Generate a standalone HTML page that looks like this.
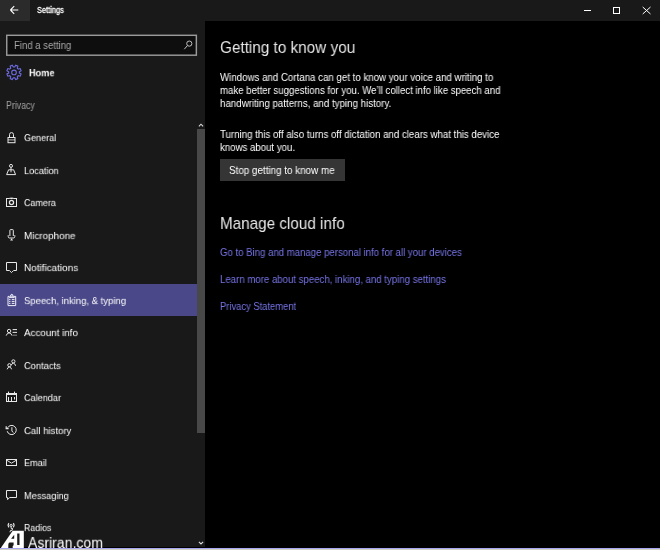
<!DOCTYPE html>
<html><head><meta charset="utf-8">
<style>
html,body{margin:0;padding:0;width:660px;height:550px;overflow:hidden;background:#000;}
body{position:relative;font-family:"Liberation Sans",sans-serif;color:#fff;}
.a{position:absolute;white-space:nowrap;line-height:1;transform-origin:0 0;}
#w{position:absolute;left:0;top:0;width:660px;height:550px;}
.t{will-change:transform;}
</style></head>
<body><div id="w">
<div class="a" style="left:0;top:0;width:660px;height:21px;background:#191919;"></div>
<div class="a" style="left:0;top:0;width:30px;height:21px;background:#2b2b2b;"></div>
<svg class="a" style="left:9px;top:4px" width="12" height="12" viewBox="0 0 12 12"><path d="M1.4 6H9.3M1.4 6L5.2 2.2M1.4 6L5.2 9.8" stroke="#fff" stroke-width="1.1" fill="none"/></svg>
<div class="a" style="left:584px;top:10px;width:7px;height:1px;background:#fff;"></div>
<div class="a" style="left:613px;top:7px;width:5px;height:5px;border:1px solid #fff;"></div>
<svg class="a" style="left:642px;top:6px" width="10" height="10" viewBox="0 0 10 10"><path d="M0.7 1L8.5 8M8.5 1L0.7 8" stroke="#fff" stroke-width="1" fill="none"/></svg>
<div class="a" style="left:0;top:21px;width:205px;height:526px;background:#191919;"></div>
<div class="a" style="left:197px;top:129px;width:8px;height:304px;background:#484848;"></div>
<svg class="a" style="left:198px;top:123px" width="6" height="4" viewBox="0 0 6 4"><path d="M0.9 3.3L3 1.2L5.1 3.3" stroke="#ddd" stroke-width="1.1" fill="none"/></svg>
<svg class="a" style="left:198px;top:541px" width="6" height="4" viewBox="0 0 6 4"><path d="M0.9 0.9L3 3L5.1 0.9" stroke="#ddd" stroke-width="1.1" fill="none"/></svg>
<svg class="a" style="left:0;top:30px" width="205" height="30" viewBox="0 30 205 30"><rect x="6.75" y="35.3" width="189.6" height="19.9" fill="#0e0e0e" stroke="#9a9a9a" stroke-width="1.45"/></svg>
<svg class="a" style="left:183px;top:39px" width="11" height="12" viewBox="0 0 11 12"><circle cx="6.3" cy="4.6" r="2.6" stroke="#c0c0c0" stroke-width="1" fill="none"/><path d="M4.5 6.5L1.3 10.2" stroke="#c0c0c0" stroke-width="1" fill="none"/></svg>
<svg class="a" style="left:0;top:0" width="30" height="90" viewBox="0 0 30 90"><g transform="translate(14 72.4)" fill="none" stroke="#6e6ce2" stroke-width="1.1"><path d="M5.35,0.70 L7.10,1.70 L6.22,3.81 L4.28,3.29 L3.29,4.28 L3.81,6.22 L1.70,7.10 L0.70,5.35 L-0.70,5.35 L-1.70,7.10 L-3.81,6.22 L-3.29,4.28 L-4.28,3.29 L-6.22,3.81 L-7.10,1.70 L-5.35,0.70 L-5.35,-0.70 L-7.10,-1.70 L-6.22,-3.81 L-4.28,-3.29 L-3.29,-4.28 L-3.81,-6.22 L-1.70,-7.10 L-0.70,-5.35 L0.70,-5.35 L1.70,-7.10 L3.81,-6.22 L3.29,-4.28 L4.28,-3.29 L6.22,-3.81 L7.10,-1.70 L5.35,-0.70Z"/><circle r="2.3"/></g></svg>
<div class="a" style="left:0;top:284px;width:197px;height:32px;background:#4a4888;"></div>
<div class="a" style="left:220px;top:159px;width:125px;height:22px;background:#353535;"></div>
<div class="a t" style="left:37px;top:6px;font-size:9.0px;color:#fff;transform:scale(0.8257,1.0000);-webkit-text-stroke:0.3px #fff;">Settings</div>
<div class="a t" style="left:14px;top:41px;font-size:10.4px;color:#a8a8a8;transform:scale(0.9202,1.0000);">Find a setting</div>
<div class="a t" style="left:29px;top:69px;font-size:10.2px;font-weight:bold;color:#fff;transform:scale(0.9000,0.9100);">Home</div>
<div class="a t" style="left:6px;top:101px;font-size:10.0px;color:#a0a0a0;transform:scale(0.8800,1.0000);">Privacy</div>
<div class="a t" style="left:24px;top:134px;font-size:10.2px;color:#fff;transform:scale(0.8893,0.8900);">General</div>
<div class="a t" style="left:24px;top:167px;font-size:10.2px;color:#fff;transform:scale(0.9000,0.8900);">Location</div>
<div class="a t" style="left:24px;top:199px;font-size:10.2px;color:#fff;transform:scale(0.8785,0.8900);">Camera</div>
<div class="a t" style="left:24px;top:232px;font-size:10.2px;color:#fff;transform:scale(0.9677,0.8900);">Microphone</div>
<div class="a t" style="left:24px;top:264px;font-size:10.2px;color:#fff;transform:scale(0.9757,0.8900);">Notifications</div>
<div class="a t" style="left:24px;top:297px;font-size:10.2px;color:#fff;transform:scale(0.9331,0.8900);">Speech, inking, &amp; typing</div>
<div class="a t" style="left:24px;top:329px;font-size:10.2px;color:#fff;transform:scale(0.9601,0.8900);">Account info</div>
<div class="a t" style="left:24px;top:362px;font-size:10.2px;color:#fff;transform:scale(0.9150,0.8900);">Contacts</div>
<div class="a t" style="left:24px;top:394px;font-size:10.2px;color:#fff;transform:scale(0.8955,0.8900);">Calendar</div>
<div class="a t" style="left:24px;top:427px;font-size:10.2px;color:#fff;transform:scale(0.9396,0.8900);">Call history</div>
<div class="a t" style="left:24px;top:459px;font-size:10.2px;color:#fff;transform:scale(0.8926,0.8900);">Email</div>
<div class="a t" style="left:24px;top:492px;font-size:10.2px;color:#fff;transform:scale(0.9084,0.8900);">Messaging</div>
<div class="a t" style="left:24px;top:524px;font-size:10.2px;color:#fff;transform:scale(0.8644,0.8900);">Radios</div>
<div class="a t" style="left:220px;top:40px;font-size:16.6px;color:#e6e6e6;transform:scale(0.9218,1.0000);">Getting to know you</div>
<div class="a t" style="left:220px;top:73px;font-size:10.2px;color:#fff;transform:scale(0.9520,1.0000);">Windows and Cortana can get to know your voice and writing to</div>
<div class="a t" style="left:220px;top:86px;font-size:10.2px;color:#fff;transform:scale(0.9440,1.0000);">make better suggestions for you. We’ll collect info like speech and</div>
<div class="a t" style="left:220px;top:99px;font-size:10.2px;color:#fff;transform:scale(0.9552,1.0000);">handwriting patterns, and typing history.</div>
<div class="a t" style="left:220px;top:130px;font-size:10.2px;color:#fff;transform:scale(0.9514,1.0000);">Turning this off also turns off dictation and clears what this device</div>
<div class="a t" style="left:220px;top:143px;font-size:10.2px;color:#fff;transform:scale(0.9468,1.0000);">knows about you.</div>
<div class="a t" style="left:229px;top:166px;font-size:10.2px;color:#fff;transform:scale(0.9660,1.0000);">Stop getting to know me</div>
<div class="a t" style="left:220px;top:216px;font-size:16.6px;color:#e6e6e6;transform:scale(0.9195,1.0000);">Manage cloud info</div>
<div class="a t" style="left:220px;top:248px;font-size:10.2px;color:#7674e6;transform:scale(0.9425,1.0000);">Go to Bing and manage personal info for all your devices</div>
<div class="a t" style="left:220px;top:275px;font-size:10.2px;color:#7674e6;transform:scale(0.9450,1.0000);">Learn more about speech, inking, and typing settings</div>
<div class="a t" style="left:220px;top:302px;font-size:10.2px;color:#7674e6;transform:scale(0.9208,1.0000);">Privacy Statement</div>
<!-- sidebar icons -->
<svg class="a" style="left:0;top:0" width="30" height="550" viewBox="0 0 30 550">
<g fill="none" stroke="#e8e8e8" stroke-width="1">
<!-- lock -->
<path d="M9.5 137.5V134.6A2 2 0 0 1 13.5 134.6V137.5"/>
<rect x="8" y="137.5" width="7" height="5.2"/>
<path d="M8 139.9H15" stroke-width="0.8"/>
<!-- location -->
<circle cx="11" cy="165.9" r="1.5"/>
<path d="M11 167.4V172.3"/>
<path d="M8.6 169.8H13.6L15.6 174.6H6.6Z"/>
<!-- camera -->
<rect x="6.5" y="198.5" width="10" height="8"/>
<path d="M9.3 198.2Q11.5 196.8 13.7 198.2" stroke="#999" stroke-width="0.8"/>
<circle cx="11.5" cy="202.5" r="2.1" stroke-width="1.2"/>
<!-- mic -->
<path d="M9.9 236V230.3Q9.9 229.6 10.6 229.6H12.6Q13.3 229.6 13.3 230.3V236"/>
<path d="M8.2 235.2V236.5Q8.2 238 9.7 238H13.3Q14.8 238 14.8 236.5V235.2"/>
<path d="M11.6 238.2L10.1 240.4H13.1Z" fill="#e8e8e8" stroke="none"/>
<!-- notifications -->
<path d="M6.5 262.5H16.5V270.5H13.6L11.5 272.6L9.4 270.5H6.5Z"/>
<!-- account info -->
<circle cx="9.1" cy="331" r="1.7"/>
<path d="M6.2 335.6Q7 333 9.1 332.9Q11.2 333 12 335.6"/>
<path d="M12.6 329.6H17M12.6 332.4H17"/>
<path d="M12.6 335.2H17" stroke="#888"/>
<!-- contacts -->
<circle cx="13.4" cy="361.4" r="1.6"/>
<path d="M11.3 365.1Q12 363.2 13.4 363.1Q14.9 363.2 15.6 365.8"/>
<circle cx="9.4" cy="365.2" r="1.6"/>
<path d="M7.2 369.3Q7.9 366.9 9.4 366.9Q10.9 366.9 11.6 369.3"/>
<!-- calendar -->
<rect x="6.5" y="393.5" width="10" height="8"/>
<path d="M6.5 394.5H16.5"/>
<path d="M8.5 391.6V393.5M14.5 391.6V393.5"/>
<path d="M8.5 397V401M11.5 397V401M14.5 397V399.5"/>
<!-- call history -->
<path d="M7.6 427.8A4.6 4.6 0 1 1 7.2 431.2"/>
<path d="M6.2 426.2V428.6H8.6" stroke-width="1.2"/>
<path d="M11.9 427.2V431L13.3 432.6"/>
<!-- email -->
<rect x="6.5" y="459.5" width="10" height="6"/>
<path d="M7 460.4L11.5 463.2L16 460.4"/>
<!-- messaging -->
<path d="M6.5 490.5H16.5V497.5H9.6L7.6 499.6V497.5H6.5Z"/>
<!-- radios -->
<path d="M8.9 523.2Q7.3 525.2 8.9 527.4M13.3 523.2Q14.9 525.2 13.3 527.4" stroke-width="1.1"/>
<circle cx="11.1" cy="525.4" r="1.1" stroke-width="1"/>
<path d="M11.1 526.6V528.4H12.6L12.1 530.4H10.6L9.9 532.2" stroke-width="1"/>
</g>
<g fill="#fff" stroke="none">
<path d="M296 296Z"/>
</g>
<!-- clipboard on selected -->
<g fill="none" stroke="#f0f0f8" stroke-width="1">
<path d="M9.5 296.4H8V305.6H15.7V296.4H14"/>
<path d="M9.2 297.4L10.4 296.4Q10.6 294.3 11.8 294.3Q13 294.3 13.2 296.4L14.4 297.4Z" fill="#c8c6e6" stroke-width="0.9"/><circle cx="11.8" cy="295.8" r="0.55" fill="#4a4888" stroke="none"/>
<path d="M9.1 299.4H10.4M9.1 301.4H10.4M9.1 303.4H10.4M11.8 299.4H14.5M11.8 301.4H14.5M11.8 303.4H14.5"/>
</g>
<!-- watermark logo -->
<path d="M12.7 530.8H23.8V548H0.85Z" fill="#fff"/>
<path d="M11.1 538.7L14.2 534.8V538.7Z" fill="#191919"/>
<path d="M17.2 533.5H19.5V545H17.2Z" fill="#191919"/>
<path d="M8.3 548V544.8Q8.5 542.6 9.6 542.6H13.6V545.2L12.7 545.9V548Z" fill="#191919"/>
</svg>
<div class="a t" style="left:28px;top:536px;font-size:15.6px;color:#fff;transform:scale(0.9000,0.9200);">Asriran.com</div>
<div class="a" style="left:0;top:548px;width:660px;height:1px;background:#a8a6f2;"></div>
<div class="a" style="left:0;top:549px;width:660px;height:1px;background:#d2d2c2;"></div>
</div></body></html>
